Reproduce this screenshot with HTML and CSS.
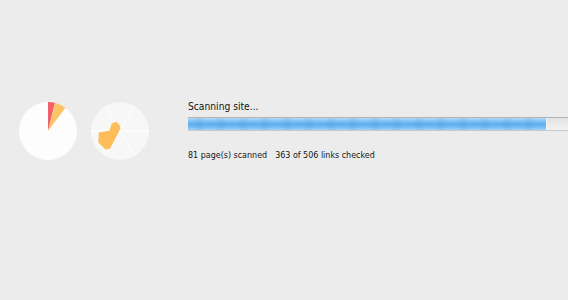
FILE: index.html
```html
<!DOCTYPE html>
<html>
<head>
<meta charset="utf-8">
<link rel="stylesheet" href="styles.css">
</head>
<body>
<div class="scan">
  <div class="charts">
    <svg class="pie" width="58" height="58" viewBox="0 0 58 58">
      <circle cx="29" cy="29" r="29" fill="#fdfdfd"/>
      <path d="M29 29 L29 0 A29 29 0 0 1 36.02 0.86 Z" fill="#f06068"/>
      <path d="M29 29 L36.02 0.86 A29 29 0 0 1 46.45 5.84 Z" fill="#fdc467"/>
    </svg>
    <svg class="pie" width="58" height="58" viewBox="0 0 58 58">
      <circle cx="29" cy="29" r="29" fill="#f7f7f7"/>
      <g stroke="#ffffff" stroke-width="1">
        <line x1="29" y1="29" x2="43.5" y2="3.9"/>
        <line x1="29" y1="29" x2="58" y2="29"/>
        <line x1="29" y1="29" x2="43.5" y2="54.1"/>
        <line x1="29" y1="29" x2="14.5" y2="54.1"/>
        <line x1="29" y1="29" x2="0" y2="29"/>
        <line x1="29" y1="29" x2="14.5" y2="3.9"/>
      </g>
      <polygon points="25,19.5 20.5,21.8 18.5,28.8 7.8,30.6 7.3,40.5 14.5,47.6 19,46.8 29.5,26.5 28.5,23" fill="#fdbd59"/>
    </svg>
  </div>
  <div class="status">
    <div class="title">Scanning site...</div>
    <div class="bar"><div class="fill" style="width: 358px"></div></div>
    <div class="stats"><span>81 page(s) scanned</span><span class="links">363 of 506 links checked</span></div>
  </div>
</div>
</body>
</html>
```

FILE: styles.css
```css
html, body {
  margin: 0;
  padding: 0;
  background: #ececec;
  overflow: hidden;
}

body {
  width: 568px;
  height: 300px;
  font-family: "DejaVu Sans Condensed", "DejaVu Sans", sans-serif;
  font-stretch: condensed;
  color: #151515;
}

.scan {
  display: flex;
  align-items: flex-start;
  padding: 102px 0 0 19px;
}

.charts {
  display: flex;
  gap: 14px;
}

.pie {
  display: block;
}

.status {
  margin-left: 39px;
  margin-top: -1px;
  width: 382px;
  flex: none;
}

.title {
  font-size: 10.2px;
  line-height: 12px;
  height: 12px;
}

.bar {
  margin-top: 4px;
  height: 12px;
  border-top: 1px solid #b3b3b3;
  border-bottom: 1px solid #c8c8c8;
  background: linear-gradient(#e2e2e2, #f2f2f2);
}

.fill {
  height: 12px;
  border-right: 1px solid #f4f4f4;
  background:
    repeating-linear-gradient(90deg, rgba(40,120,210,0) 0 5px, rgba(40,120,210,0.1) 10px 12px, rgba(40,120,210,0) 17px 22px),
    linear-gradient(#b4dbf9 0%, #86c6f6 22%, #5eaeee 50%, #73bbf4 75%, #a4d3f8 100%);
}

.stats {
  margin-top: 19px;
  font-size: 8.9px;
  line-height: 11px;
}

.links {
  margin-left: 8px;
}
```
